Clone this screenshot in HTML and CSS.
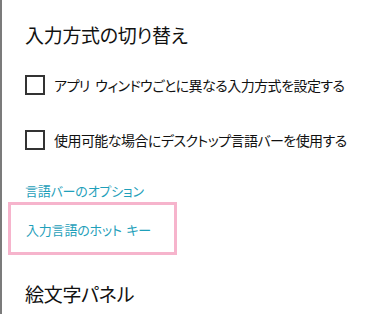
FILE: index.html
```html
<!DOCTYPE html>
<html lang="ja">
<head>
<meta charset="utf-8">
<link rel="stylesheet" href="styles.css">
</head>
<body>
<div class="page">
  <h2 class="heading first">入力方式の切り替え</h2>
  <label class="check">
    <span class="box"></span>
    <span class="label">アプリ ウィンドウごとに異なる入力方式を設定する</span>
  </label>
  <label class="check second">
    <span class="box"></span>
    <span class="label">使用可能な場合にデスクトップ言語バーを使用する</span>
  </label>
  <a class="link option">言語バーのオプション</a>
  <div class="focus">
    <a class="link">入力言語のホット キー</a>
  </div>
  <h2 class="heading emoji">絵文字パネル</h2>
</div>
</body>
</html>
```
FILE: styles.css
```css
html, body {
  margin: 0;
  padding: 0;
  background: #ffffff;
}
body {
  font-family: "Noto Sans CJK JP", "Noto Sans", sans-serif;
  font-feature-settings: "palt";
  color: #000;
  width: 379px;
  height: 314px;
  overflow: hidden;
}
.page {
  border-left: 2px solid #7b7b7b;
  height: 314px;
  box-sizing: border-box;
  padding-left: 23px;
}
.heading {
  margin: 0;
  font-size: 19px;
  font-weight: 400;
  line-height: 28px;
  color: #111;
  letter-spacing: -0.3px;
}
.first {
  padding-top: 21px;
}
.check {
  display: flex;
  align-items: center;
  gap: 9px;
  height: 20px;
  margin-top: 26px;
  white-space: nowrap;
}
.second {
  margin-top: 35px;
}
.box {
  width: 20px;
  height: 20px;
  box-sizing: border-box;
  border: 2px solid #333;
  flex: none;
}
.label {
  font-size: 14px;
  line-height: 20px;
  color: #111;
  letter-spacing: -0.55px;
  word-spacing: 3px;
}
.link {
  display: block;
  font-size: 13px;
  line-height: 20px;
  color: #1fa0ba;
  text-decoration: none;
  letter-spacing: -0.2px;
  word-spacing: 2px;
  white-space: nowrap;
}
.option {
  margin-top: 31px;
}
.focus {
  margin-left: -17px;
  margin-top: 1px;
  width: 169px;
  height: 53px;
  box-sizing: border-box;
  border: 3px solid #f6b4cc;
  padding: 15px 0 0 15px;
}
.emoji {
  margin-top: 25px;
}
```
